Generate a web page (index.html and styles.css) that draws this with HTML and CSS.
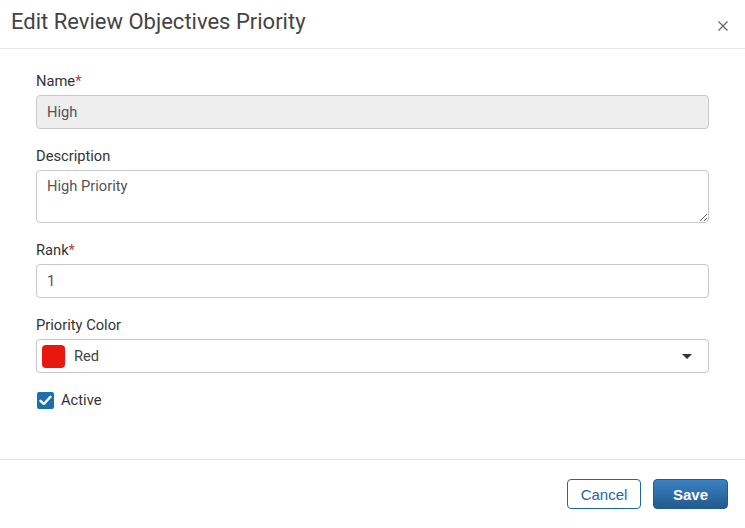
FILE: index.html
```html
<!DOCTYPE html>
<html lang="en">
<head>
<meta charset="utf-8">
<title>Edit Review Objectives Priority</title>
<link rel="stylesheet" href="styles.css">
</head>
<body>
<div class="dialog">
  <header class="dlg-header">
    <h1 class="dlg-title">Edit Review Objectives Priority</h1>
    <button class="close-btn" aria-label="Close">
      <svg width="10" height="10" viewBox="0 0 10 10"><path d="M0.5 0.5L9.5 9.5M9.5 0.5L0.5 9.5" stroke="#666" stroke-width="1.3" fill="none"/></svg>
    </button>
  </header>
  <main class="dlg-body">
    <div class="field">
      <label class="field-label">Name<span class="req">*</span></label>
      <div class="input input-disabled">High</div>
    </div>
    <div class="field">
      <label class="field-label">Description</label>
      <textarea class="textarea">High Priority</textarea>
    </div>
    <div class="field">
      <label class="field-label">Rank<span class="req">*</span></label>
      <div class="input">1</div>
    </div>
    <div class="field">
      <label class="field-label">Priority Color</label>
      <div class="select">
        <span class="swatch"></span>
        <span class="select-text">Red</span>
        <span class="caret"></span>
      </div>
    </div>
    <div class="check-row">
      <span class="checkbox">
        <svg width="13" height="11" viewBox="0 0 13 11"><path d="M1.5 5.8L4.8 9L11.5 1.8" stroke="#fff" stroke-width="2.4" fill="none" stroke-linecap="round" stroke-linejoin="round"/></svg>
      </span>
      <span class="check-label">Active</span>
    </div>
  </main>
  <footer class="dlg-footer">
    <button class="btn btn-outline">Cancel</button>
    <button class="btn btn-primary">Save</button>
  </footer>
</div>
</body>
</html>
```

FILE: styles.css
```css
html, body {
  margin: 0;
  padding: 0;
  background: #fff;
}
body {
  font-family: Roboto, "Liberation Sans", sans-serif;
  color: #333;
  width: 745px;
  height: 528px;
  overflow: hidden;
}
.dialog {
  display: flex;
  flex-direction: column;
  height: 528px;
}
.dlg-header {
  height: 48px;
  border-bottom: 1px solid #e5e5e5;
  display: flex;
  align-items: center;
  justify-content: space-between;
  padding: 0 16px 0 11px;
  flex-shrink: 0;
}
.dlg-title {
  margin: 0;
  font-size: 22px;
  font-weight: 400;
  color: #444;
  line-height: 24px;
  position: relative;
  top: -2px;
}
.close-btn {
  border: 0;
  background: none;
  padding: 0;
  width: 12px;
  height: 12px;
  display: flex;
  align-items: center;
  justify-content: center;
  margin-top: 4px;
}
.dlg-body {
  flex: 1;
  padding: 22px 36px 0 36px;
}
.field {
  margin-bottom: 17px;
}
.field-label {
  display: block;
  font-size: 14.7px;
  line-height: 20px;
  margin-bottom: 4px;
  color: #333;
}
.req {
  color: #c0392b;
}
.input, .textarea, .select {
  box-sizing: border-box;
  width: 673px;
  border: 1px solid #c8c8c8;
  border-radius: 4px;
  background: #fff;
  font-family: Roboto, "Liberation Sans", sans-serif;
  font-size: 14.7px;
  color: #555;
}
.input {
  height: 34px;
  line-height: 32px;
  padding: 0 10px;
}
.input-disabled {
  background: #eee;
}
.textarea {
  display: block;
  height: 53px;
  padding: 5px 10px;
  line-height: 20px;
  resize: vertical;
  outline: none;
}
.select {
  height: 34px;
  display: flex;
  align-items: center;
  padding: 0 16px 0 5px;
}
.swatch {
  width: 23px;
  height: 23px;
  border-radius: 4px;
  background: #e8170f;
  flex-shrink: 0;
}
.select-text {
  margin-left: 9px;
  flex: 1;
  color: #444;
}
.caret {
  width: 0;
  height: 0;
  border-left: 5px solid transparent;
  border-right: 5px solid transparent;
  border-top: 5px solid #333;
}
.check-row {
  display: flex;
  align-items: center;
  margin-top: 18px;
  padding-left: 1px;
}
.checkbox {
  width: 17px;
  height: 17px;
  border-radius: 2px;
  background: #1b6fad;
  display: flex;
  align-items: center;
  justify-content: center;
}
.check-label {
  margin-left: 7px;
  font-size: 14.7px;
  color: #333;
}
.dlg-footer {
  border-top: 1px solid #e5e5e5;
  height: 69px;
  box-sizing: border-box;
  display: flex;
  justify-content: flex-end;
  align-items: flex-start;
  gap: 12px;
  padding: 19px 17px 0 0;
  flex-shrink: 0;
}
.btn {
  height: 30px;
  border-radius: 4px;
  font-family: "Liberation Sans", Arial, sans-serif;
  font-size: 15px;
  cursor: pointer;
}
.btn-outline {
  width: 74px;
  background: #fff;
  border: 1px solid #2466a3;
  color: #2466a3;
}
.btn-primary {
  width: 75px;
  border: 1px solid #245b8c;
  color: #fff;
  font-weight: 700;
  background: linear-gradient(to bottom, #3a82c4, #245a8c);
}
```
